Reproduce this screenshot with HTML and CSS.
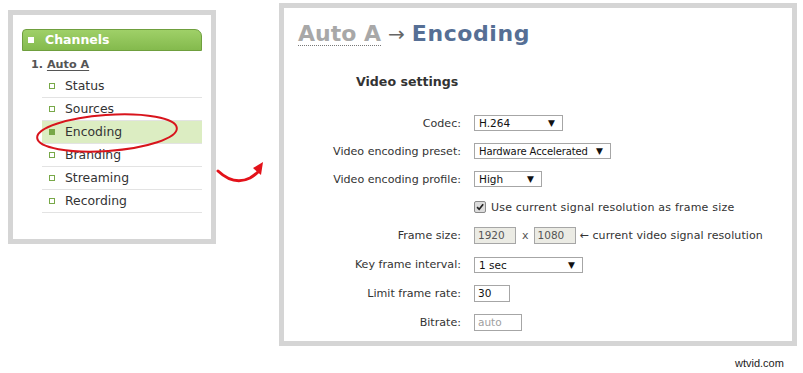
FILE: index.html
```html
<!DOCTYPE html>
<html>
<head>
<meta charset="utf-8">
<link rel="stylesheet" href="styles.css">
</head>
<body>
<div class="stage">
  <div class="panel-left">
    <div class="ch-header"><span class="ch-sq"></span>Channels</div>
    <div class="ch-name">1. <u>Auto A</u></div>
    <ul class="menu">
      <li><span class="bul"></span>Status</li>
      <li><span class="bul"></span>Sources</li>
      <li class="active"><span class="bul"></span>Encoding</li>
      <li><span class="bul"></span>Branding</li>
      <li><span class="bul"></span>Streaming</li>
      <li><span class="bul"></span>Recording</li>
    </ul>
  </div>

  <div class="panel-right">
    <h1 class="title"><span class="crumb">Auto A</span><span class="arr">→</span><span class="page">Encoding</span></h1>
    <h2 class="section">Video settings</h2>
    <div class="form">
      <div class="lbl r1">Codec:</div>
      <div class="ctl r1"><div class="sel w-codec"><span>H.264</span><span class="tri">▼</span></div></div>

      <div class="lbl r1">Video encoding preset:</div>
      <div class="ctl r1"><div class="sel w-preset"><span>Hardware Accelerated</span><span class="tri">▼</span></div></div>

      <div class="lbl r1">Video encoding profile:</div>
      <div class="ctl r1"><div class="sel w-profile"><span>High</span><span class="tri">▼</span></div></div>

      <div class="lbl r1"></div>
      <div class="ctl r1"><span class="chk"><svg viewBox="0 0 12 12" width="12" height="12"><path d="M2.5 6.2 L5 8.8 L9.8 2.8" fill="none" stroke="#222" stroke-width="2"/></svg></span><span class="txt wide">Use current signal resolution as frame size</span></div>

      <div class="lbl r2">Frame size:</div>
      <div class="ctl r2"><div class="inp dis w-fs">1920</div><span class="times">x</span><div class="inp dis w-fs">1080</div><span class="txt note">← current video signal resolution</span></div>

      <div class="lbl r2">Key frame interval:</div>
      <div class="ctl r2"><div class="sel w-key"><span>1 sec</span><span class="tri">▼</span></div></div>

      <div class="lbl r2">Limit frame rate:</div>
      <div class="ctl r2"><div class="inp w-rate">30</div></div>

      <div class="lbl r2">Bitrate:</div>
      <div class="ctl r2"><div class="inp w-bit ph">auto</div></div>
    </div>
  </div>

  <svg class="ellipse" width="160" height="50" viewBox="0 0 160 50">
    <ellipse cx="77" cy="24" rx="70" ry="18" fill="none" stroke="#d8141c" stroke-width="2" transform="rotate(-4 77 24)"/>
  </svg>
  <svg class="curve" width="60" height="40" viewBox="0 0 60 40">
    <path d="M4 17 Q20 32 36 24 Q41 21 44 18" fill="none" stroke="#e3121a" stroke-width="3" stroke-linecap="round"/>
    <path d="M49 8 L39 14 L47 21 Z" fill="#e3121a"/>
  </svg>
  <div class="watermark">wtvid.com</div>
</div>
</body>
</html>
```

FILE: styles.css
```css
* { box-sizing: border-box; }
html, body { margin: 0; padding: 0; background: #fff; }
body { width: 803px; height: 373px; overflow: hidden; font-family: "DejaVu Sans", Verdana, sans-serif; color: #333; }

.stage { position: relative; display: flex; align-items: flex-start; width: 803px; height: 373px; }

.panel-left {
  margin: 10px 0 0 8px;
  width: 208px; height: 234px;
  border: 5px solid #d5d5d5;
  padding: 14px 9px 0 9px;
}
.ch-header {
  height: 22px;
  border: 1px solid #6f9f3e;
  border-radius: 4px 7px 0 0;
  background: linear-gradient(#9fd068, #84ba4d);
  color: #fff;
  font-weight: bold;
  font-size: 12.5px;
  line-height: 20px;
  display: flex; align-items: center;
  padding-left: 5px;
}
.ch-sq { width: 6px; height: 6px; background: #fff; margin-right: 11px; }
.ch-name { font-size: 11.2px; font-weight: bold; color: #555; padding: 7px 0 0 9px; height: 24px; line-height: 14px; }
.ch-name u { text-decoration-thickness: 1px; text-underline-offset: 2px; }

.menu { list-style: none; margin: 0 0 0 20px; padding: 0; }
.menu li {
  height: 23px;
  border-bottom: 1px solid #e3e3e3;
  font-size: 12.4px;
  line-height: 22px;
  color: #333;
  display: flex; align-items: center;
  padding-left: 7px;
}
.menu li.active { background: #dcedc2; }
.bul { width: 6px; height: 6px; border: 1px solid #78a848; margin-right: 10px; }
.menu li.active .bul { background: #78a848; }

.panel-right {
  margin: 3px 0 0 63px;
  width: 518px; height: 343px;
  border: 5px solid #d5d5d5;
  padding: 13px 0 0 14px;
}
.title { margin: 0; font-size: 22px; line-height: 26px; font-weight: bold; white-space: nowrap; display: flex; align-items: baseline; }
.crumb { color: #a8a8a8; border-bottom: 1px dotted #777; line-height: 22px; }
.arr { color: #666; font-weight: normal; font-size: 20px; margin: 0 7px 0 7px; }
.page { color: #566f95; letter-spacing: 0.6px; }
.section { margin: 27px 0 0 58px; font-size: 12.6px; line-height: 16px; font-weight: bold; color: #333; }

.form {
  margin: 19px 0 0 -14px;
  display: grid;
  grid-template-columns: 177px 1fr;
  column-gap: 13px;
}
.r1 { height: 28px; }
.r2 { height: 29px; }
.lbl { font-size: 11.1px; text-align: right; display: flex; align-items: center; justify-content: flex-end; color: #333; white-space: nowrap; }
.ctl { display: flex; align-items: center; font-size: 11px; }

.sel {
  height: 16px;
  border: 1px solid #a6a6a6;
  background: #fff;
  color: #111;
  font-size: 10.5px;
  white-space: nowrap;
  display: flex; align-items: center; justify-content: space-between;
  padding: 0 7px 0 4px;
}
.tri { font-size: 9px; color: #111; }
.w-codec { width: 89px; }
.w-preset { width: 137px; }
.w-preset span:first-child { font-size: 10px; letter-spacing: -0.1px; }
.w-profile { width: 68px; }
.w-key { width: 109px; }

.inp {
  height: 17px;
  border: 1px solid #a6a6a6;
  background: #fff;
  font-size: 10.5px;
  color: #111;
  padding-left: 3px;
  line-height: 15px;
}
.inp.dis { background: #ebebe4; color: #555; }
.inp.ph { color: #a0a0a0; }
.w-fs { width: 42px; }
.w-rate { width: 36px; }
.w-bit { width: 48px; }
.times { margin: 0 5px 0 6px; color: #555; font-size: 11px; }
.note { margin-left: 4px; letter-spacing: 0.1px; }

.chk {
  width: 12px; height: 12px;
  border: 1px solid #8a8a8a;
  border-radius: 2px;
  background: #dcdcdc;
  display: flex; align-items: center; justify-content: center;
  margin-right: 5px;
}
.chk svg { display: block; }
.txt { font-size: 11px; color: #333; white-space: nowrap; }
.txt.wide { letter-spacing: 0.2px; }

.ellipse { position: absolute; left: 30px; top: 109px; }
.curve { position: absolute; left: 214px; top: 154px; }
.watermark {
  position: absolute; left: 735px; top: 357px;
  font-family: "Liberation Sans", Arial, sans-serif; font-size: 11px; color: #222;
}
```
